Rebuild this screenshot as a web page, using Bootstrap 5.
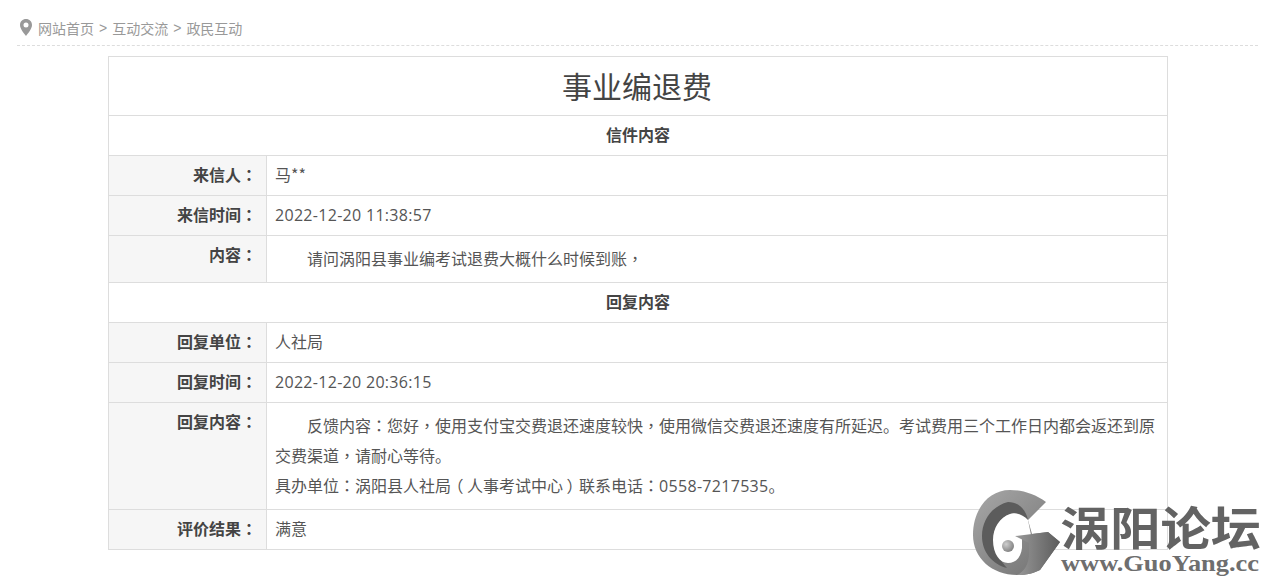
<!DOCTYPE html>
<html lang="zh-CN">
<head>
<meta charset="utf-8">
<title>事业编退费</title>
<link href="https://cdn.jsdelivr.net/npm/bootstrap@5.3.0/dist/css/bootstrap.min.css" rel="stylesheet">
<style>
html,body{height:584px;overflow:hidden}
body{font-family:"Noto Sans CJK SC","Noto Sans",sans-serif;color:#555;font-size:16px;background:#fff;position:relative}
.crumb-bar{margin:0 14px 0 17px;height:46px;padding-top:18px;border-bottom:1px dashed #ddd;color:#999;font-size:14px;line-height:20px}
.crumb-bar svg{margin:1px 6px 0 3px}
.crumb-sep{margin:0 5px;font-family:"Liberation Sans",sans-serif}
.letter-wrap{width:1060px;margin:10px auto 0 108px}
.letter-table{width:1060px;border-collapse:collapse;table-layout:fixed;margin:0}
.letter-table .col-lbl{width:158px}
.letter-table td{border:1px solid #ddd;padding:7px 8px 9px;line-height:23px;vertical-align:top}
.letter-table .head-title{font-size:30px;font-weight:400;text-align:center;color:#444;line-height:42px;padding:7px 10px 9px 8px}
.letter-table .sec-title{text-align:center;font-weight:700;color:#444}
.letter-table .lbl{background:#f6f6f6;text-align:right;font-weight:700;color:#444;padding-right:9px}
.letter-table .body-cell{line-height:30px;padding:7px 8px 9px}
.indent-para{text-indent:32px;margin:0}
.pn{font-family:"Noto Sans CJK TC",sans-serif}
.paren{display:inline-block;width:16px;text-align:center;text-indent:0;font-feature-settings:"palt";line-height:1}
.dt{font-family:"Open Sans",sans-serif;letter-spacing:.3px;line-height:1}
.logo-mark{position:absolute;left:972px;top:490px}
</style>
</head>
<body>
<div class="crumb-bar d-flex align-items-start">
<svg width="12" height="17" viewBox="0 0 12 17"><path fill="#999" fill-rule="evenodd" d="M6 0C2.6 0 0 2.6 0 5.9c0 3.6 3.6 8 6 11 2.4-3 6-7.400 6-11C12 2.600 9.400 0 6 0zm0 3.500a2.500 2.500 0 1 1 0 5 2.500 2.500 0 0 1 0-5z"/></svg>
<span>网站首页</span><span class="crumb-sep">&gt;</span><span>互动交流</span><span class="crumb-sep">&gt;</span><span>政民互动</span>
</div>
<div class="letter-wrap">
<table class="letter-table">
<colgroup><col class="col-lbl"><col></colgroup>
<tbody>
<tr><td colspan="2" class="head-title">事业编退费</td></tr>
<tr><td colspan="2" class="sec-title">信件内容</td></tr>
<tr><td class="lbl">来信人<span class="pn" lang="zh-TW">：</span></td><td>马**</td></tr>
<tr><td class="lbl">来信时间<span class="pn" lang="zh-TW">：</span></td><td><span class="dt">2022-12-20 11:38:57</span></td></tr>
<tr><td class="lbl">内容<span class="pn" lang="zh-TW">：</span></td><td class="body-cell"><p class="indent-para">请问涡阳县事业编考试退费大概什么时候到账<span class="pn" lang="zh-TW">，</span></p></td></tr>
<tr><td colspan="2" class="sec-title">回复内容</td></tr>
<tr><td class="lbl">回复单位<span class="pn" lang="zh-TW">：</span></td><td>人社局</td></tr>
<tr><td class="lbl">回复时间<span class="pn" lang="zh-TW">：</span></td><td><span class="dt">2022-12-20 20:36:15</span></td></tr>
<tr><td class="lbl">回复内容<span class="pn" lang="zh-TW">：</span></td><td class="body-cell"><p class="indent-para">反馈内容<span class="pn" lang="zh-TW">：</span>您好<span class="pn" lang="zh-TW">，</span>使用支付宝交费退还速度较快<span class="pn" lang="zh-TW">，</span>使用微信交费退还速度有所延迟。考试费用三个工作日内都会返还到原交费渠道<span class="pn" lang="zh-TW">，</span>请耐心等待。</p><p class="m-0">具办单位<span class="pn" lang="zh-TW">：</span>涡阳县人社局<span class="pn paren" lang="zh-TW">（</span>人事考试中心<span class="pn paren" lang="zh-TW">）</span>联系电话<span class="pn" lang="zh-TW">：</span><span class="dt">0558-7217535</span>。</p></td></tr>
<tr><td class="lbl">评价结果<span class="pn" lang="zh-TW">：</span></td><td>满意</td></tr>
</tbody>
</table>
</div>
<svg class="logo-mark" width="292" height="88" viewBox="0 0 292 88">
<defs>
<linearGradient id="gA" x1="0" y1="0" x2="1" y2="1"><stop offset="0" stop-color="#a8a8a8"/><stop offset="1" stop-color="#6e6e6e"/></linearGradient>
<linearGradient id="gB" x1="0" y1="0" x2="1" y2="0"><stop offset="0" stop-color="#9a9a9a"/><stop offset="1" stop-color="#5c5c5c"/></linearGradient>
<radialGradient id="gC" cx=".35" cy=".35" r=".7"><stop offset="0" stop-color="#cfcfcf"/><stop offset="1" stop-color="#808080"/></radialGradient>
</defs>
<path fill="url(#gA)" d="M38 0C16 0 1 20 1 45C1 68 20 85 45 85C55 85 62 83 68 80L88 52L76 42L60 44L56 30L74 12C63 4 50 0 38 0Z"/>
<path fill="#5c5c5c" d="M36 12C20 16 10 30 10 46C10 62 20 74 35 78C28 70 22 60 22 48C22 36 28 28 38 24C44 22 50 24 56 30C54 20 47 12 36 12Z"/>
<path fill="#fff" d="M38 24C28 27 21 38 21 50C21 64 28 73 36 73C44 73 49 67 50 58L50 47L59 45L56 30C51 25 44 22 38 24Z"/>
<path fill="url(#gB)" d="M43 46L76 42L88 52L68 80C62 83 55 85 45 85C52 82 57 74 57 64L57 53Z"/>
<circle cx="36" cy="56" r="6" fill="url(#gC)"/>
<text x="88" y="55" font-family="'Noto Sans CJK SC',sans-serif" font-weight="700" font-size="46" fill="#636363" textLength="201" lengthAdjust="spacingAndGlyphs">涡阳论坛</text>
<text x="89" y="81" font-family="'Liberation Serif',serif" font-weight="700" font-size="23" fill="#6e6e6e" textLength="198" lengthAdjust="spacingAndGlyphs">www.GuoYang.cc</text>
</svg>
<script src="https://cdn.jsdelivr.net/npm/bootstrap@5.3.0/dist/js/bootstrap.bundle.min.js"></script>
</body>
</html>
